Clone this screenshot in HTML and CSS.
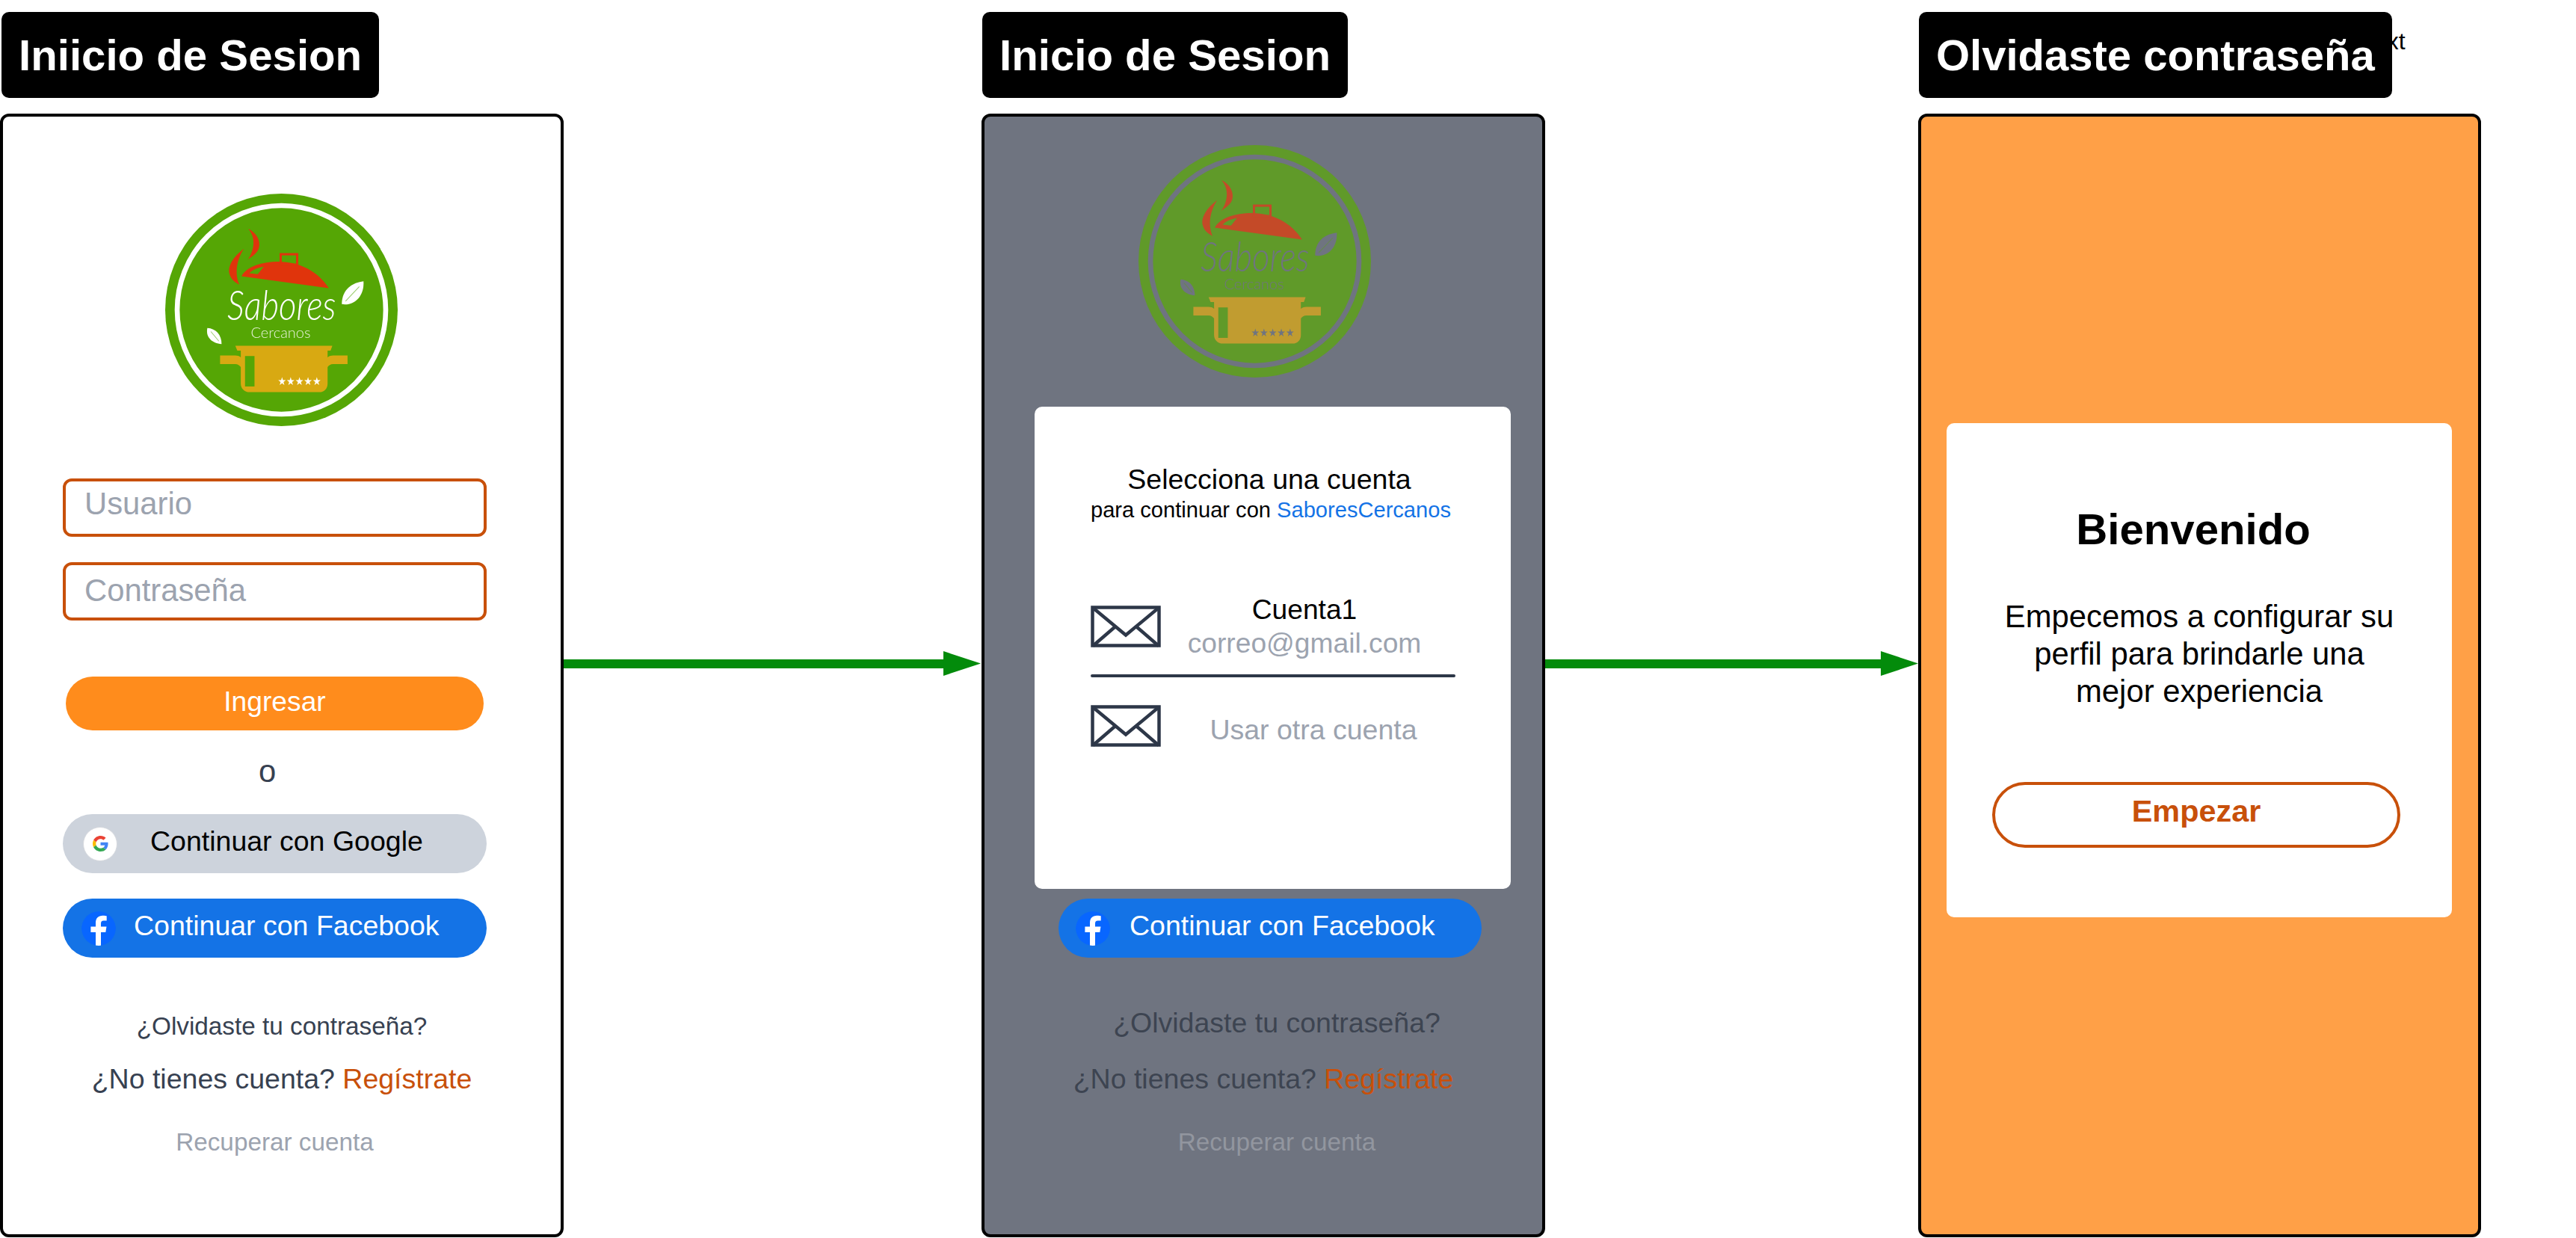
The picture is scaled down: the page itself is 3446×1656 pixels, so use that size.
FILE: index.html
```html
<!DOCTYPE html>
<html lang="es">
<head>
<meta charset="utf-8">
<title>Sabores Cercanos</title>
<link rel="stylesheet" href="styles.css">
</head>
<body>
<svg class="defs" width="0" height="0" aria-hidden="true">
  <defs>
    <symbol id="logo" viewBox="128 89 930 932">
      <circle class="l-disc" cx="593" cy="555" r="466"/>
      <circle class="l-ring" cx="593" cy="555" r="418"/>
      <path class="l-red" d="M460 230C502 250 518 298 492 326C480 340 468 345 458 354C482 320 494 270 460 230Z"/>
      <path class="l-red" d="M442 310C402 340 375 380 385 412C392 436 410 446 424 454C410 420 405 370 442 310Z"/>
      <path class="l-red" d="M433 420C450 388 500 365 570 362C660 358 740 400 783 468Z"/>
      <path class="l-hole" d="M464 408C478 394 498 386 522 382L498 412Z"/>
      <rect class="l-handle" x="590" y="332" width="66" height="42"/>
      <path class="l-white" d="M922 440C880 445 835 470 835 532C885 540 926 500 922 440Z"/>
      <path class="l-vein" d="M850 520L905 462"/>
      <path class="l-white" d="M296 628C330 630 353 655 353 692C315 690 288 665 296 628Z"/>
      <path class="l-vein" d="M310 642L342 680"/>
      <text class="l-sabores" x="376" y="596" textLength="436" lengthAdjust="spacingAndGlyphs">Sabores</text>
      <text class="l-cercanos" x="470" y="668" textLength="240" lengthAdjust="spacingAndGlyphs">Cercanos</text>
      <path class="l-pot" d="M408 699H797L790 718H778V745C785 740 792 738 800 738H858V772H800C790 772 782 778 778 784V850C778 870 765 885 745 885H465C445 885 430 870 430 850V784C425 778 418 772 408 772H347V738H408C416 738 424 740 430 745V718H416Z"/>
      <rect class="l-slot" x="447" y="740" width="38" height="122"/>
      <text class="l-stars" x="578" y="856" textLength="174" lengthAdjust="spacingAndGlyphs">★★★★★</text>
    </symbol>
    <symbol id="mail" viewBox="0 0 94 56">
      <rect class="m-line" x="2.5" y="2.5" width="89" height="51"/>
      <path class="m-line" d="M3 3L47 39.500L91 3M3 54L32 29M91 54L62 29"/>
    </symbol>
    <symbol id="fb" viewBox="0 0 46 46">
      <circle class="f-disc" cx="23" cy="23" r="23"/>
      <path class="f-glyph" d="M26 46V28h6.300l1.200-7.500H26v-4.200c0-2.200 1-3.800 3.800-3.800h3.900V6.200S31 5.700 28.300 5.700C22.600 5.700 19 9.100 19 15.400v5.100h-6.600V28H19v18Z"/>
    </symbol>
    <symbol id="google" viewBox="0 0 48 48">
      <path fill="#EA4335" d="M24 9.500c3.540 0 6.710 1.220 9.210 3.600l6.850-6.850C35.900 2.380 30.470 0 24 0 14.620 0 6.510 5.380 2.560 13.220l7.980 6.190C12.430 13.720 17.740 9.500 24 9.500z"/>
      <path fill="#4285F4" d="M46.980 24.550c0-1.570-.15-3.090-.38-4.550H24v9.020h12.940c-.58 2.960-2.260 5.480-4.780 7.180l7.730 6c4.510-4.180 7.090-10.360 7.090-17.650z"/>
      <path fill="#FBBC05" d="M10.530 28.590c-.48-1.450-.76-2.990-.76-4.590s.27-3.140.76-4.590l-7.980-6.190C.92 16.460 0 20.120 0 24c0 3.880.92 7.540 2.560 10.780l7.970-6.190z"/>
      <path fill="#34A853" d="M24 48c6.480 0 11.930-2.130 15.890-5.810l-7.730-6c-2.150 1.450-4.920 2.300-8.160 2.300-6.260 0-11.570-4.220-13.470-9.910l-7.980 6.190C6.510 42.620 14.620 48 24 48z"/>
    </symbol>
  </defs>
</svg>

<main class="board">
  <section class="screen screen-login">
    <h1 class="title">Iniicio de Sesion</h1>
    <div class="panel panel-white">
      <svg class="logo logo-a"><use href="#logo"/></svg>
      <div class="field field-user">Usuario</div>
      <div class="field field-pass">Contraseña</div>
      <button class="btn-login">Ingresar</button>
      <p class="or">o</p>
      <div class="social social-google">
        <span class="google-badge"><svg class="google-icon"><use href="#google"/></svg></span>
        <span class="social-label">Continuar con Google</span>
      </div>
      <div class="social social-fb">
        <svg class="fb-icon"><use href="#fb"/></svg>
        <span class="social-label">Continuar con Facebook</span>
      </div>
      <p class="forgot">¿Olvidaste tu contraseña?</p>
      <p class="signup">¿No tienes cuenta? <span class="accent">Regístrate</span></p>
      <p class="recover">Recuperar cuenta</p>
    </div>
  </section>

  <div class="connector connector-a"><span class="shaft"></span><span class="head"></span></div>

  <section class="screen screen-select">
    <h1 class="title title-b">Inicio de Sesion</h1>
    <div class="panel panel-gray">
      <svg class="logo logo-b"><use href="#logo"/></svg>
      <div class="modal">
        <h2 class="modal-title">Selecciona una cuenta</h2>
        <p class="modal-sub">para continuar con <span class="link">SaboresCercanos</span></p>
        <div class="account">
          <svg class="mail"><use href="#mail"/></svg>
          <div class="account-text">
            <div class="account-name">Cuenta1</div>
            <div class="account-mail">correo@gmail.com</div>
          </div>
        </div>
        <div class="divider"></div>
        <div class="account account-other">
          <svg class="mail mail-other"><use href="#mail"/></svg>
          <div class="other-text">Usar otra cuenta</div>
        </div>
      </div>
      <div class="social social-fb social-fb-b">
        <svg class="fb-icon"><use href="#fb"/></svg>
        <span class="social-label">Continuar con Facebook</span>
      </div>
      <p class="forgot forgot-b">¿Olvidaste tu contraseña?</p>
      <p class="signup signup-b">¿No tienes cuenta? <span class="accent">Regístrate</span></p>
      <p class="recover recover-b">Recuperar cuenta</p>
    </div>
  </section>

  <div class="connector connector-b"><span class="shaft"></span><span class="head"></span></div>

  <section class="screen screen-welcome">
    <span class="stray">Text</span>
    <h1 class="title title-c">Olvidaste contraseña</h1>
    <div class="panel panel-orange">
      <div class="card">
        <h2 class="card-title">Bienvenido</h2>
        <p class="card-text">Empecemos a configurar su<br>perfil para brindarle una<br>mejor experiencia</p>
        <button class="btn-start">Empezar</button>
      </div>
    </div>
  </section>
</main>
</body>
</html>
```

FILE: styles.css
```css
* { box-sizing: border-box; }
html, body { margin: 0; padding: 0; background: #fff; }
body { font-family: "Liberation Sans", Arial, sans-serif; color: #000; overflow: hidden; }
p, h1, h2 { margin: 0; font-weight: normal; }
button { font-family: inherit; border: 0; padding: 0; cursor: pointer; }
.defs { position: absolute; }

.board { display: flex; width: 3446px; height: 1656px; align-items: flex-start; }
.screen { position: relative; flex: 0 0 754px; display: flex; flex-direction: column; padding-top: 16px; }

.title {
  align-self: flex-start; position: relative; z-index: 1; height: 115px; margin: 0 0 21px 2px; padding: 0 23px;
  background: #000; color: #fff; border-radius: 10px; font-size: 58.200px; font-weight: bold; line-height: 115px; white-space: nowrap;
}
.title-b { margin-left: 1px; }
.title-c { margin-left: 1px; font-size: 58px; }
.stray { position: absolute; left: 593px; top: 37px; font-size: 32px; line-height: 36px; }

.panel { width: 754px; height: 1503px; border: 4px solid #000; border-radius: 12px; display: flex; flex-direction: column; align-items: flex-start; }
.panel-white { background: #fff; }
.panel-gray { background: #6f7480; }
.panel-orange { width: 753px; background: #ffa047; }

/* Connectors */
.connector { display: flex; align-items: center; height: 33px; margin-top: 871px; }
.connector-a { flex: 0 0 558px; margin-right: 1px; }
.connector-b { flex: 0 0 499px; }
.shaft { flex: 1; height: 12px; background: #038b0b; }
.head { flex: 0 0 50px; height: 33px; background: #038b0b; clip-path: polygon(0 0, 100% 50%, 0 100%); }

/* Logo */
.logo { width: 311px; height: 311px; filter: blur(0.5px); flex: none; display: block; }
.logo-a { margin: 103px 0 0 217px; --disc: #55a605; --white: #fff; --red: #e0340c; --pot: #d8a912; --letter: #fff; --letter2: #e6f1d8; --star: #fff; }
.logo-b { margin: 38px 0 0 206px; --disc: #609a29; --white: #6f7480; --red: #c44a28; --pot: #c19c30; --letter: #6f7480; --letter2: #6f7480; --star: #6f7480; }
.l-disc { fill: var(--disc); }
.l-ring { fill: none; stroke: var(--white); stroke-width: 20; }
.l-red { fill: var(--red); }
.l-hole, .l-slot { fill: var(--disc); }
.l-handle { fill: none; stroke: var(--red); stroke-width: 9; }
.l-white { fill: var(--white); }
.l-vein { fill: none; stroke: var(--disc); stroke-width: 3; opacity: .6; }
.l-sabores { font-family: Lato, "Open Sans", sans-serif; font-weight: 300; font-style: italic; font-size: 165px; fill: var(--letter); }
.l-cercanos { font-family: Lato, "Open Sans", sans-serif; font-weight: 300; font-size: 58px; fill: var(--letter2); }
.l-pot { fill: var(--pot); }
.l-stars { font-family: "DejaVu Sans", sans-serif; font-size: 44px; fill: var(--star); }

/* Form */
.field {
  width: 567px; height: 78px; margin-left: 80px; padding: 0 25px; display: flex; align-items: center;
  border: 4px solid #c8500a; border-radius: 12px; color: #9ca3af; font-size: 41.800px; background: #fff;
}
.field-user { margin-top: 70px; padding-bottom: 11px; }
.field-pass { margin-top: 34px; padding-bottom: 3px; }
.btn-login { width: 559px; height: 72px; margin: 75px 0 0 84px; padding-bottom: 6px; border-radius: 36px; background: #ff8c1c; color: #fff; font-size: 37.200px; }
.or { width: 547px; margin: 32px 0 0 80px; text-align: center; font-size: 41.800px; line-height: 46px; color: #374151; }

.social { width: 567px; height: 79px; margin-left: 80px; border-radius: 40px; display: flex; align-items: center; font-size: 37.500px; }
.social-label { padding-bottom: 7px; white-space: nowrap; }
.social-google { margin-top: 34px; padding-left: 27px; gap: 44px; background: #cdd3dc; }
.social-fb { margin-top: 34px; padding-left: 25px; gap: 24px; background: #1473e6; color: #fff; }
.social-fb-b { width: 566px; margin: 13px 0 0 99px; padding-left: 23px; gap: 26px; }
.google-badge { width: 46px; height: 46px; border-radius: 50%; background: #fff; border: 1px solid #d6d9de; display: flex; align-items: center; justify-content: center; flex: none; }
.google-icon { width: 21px; height: 21px; }
.fb-icon { width: 46px; height: 46px; flex: none; border-radius: 50%; overflow: hidden; }
.f-disc { fill: #0866ff; }
.f-glyph { fill: #fff; }

.forgot { width: 100%; margin-top: 72px; text-align: center; font-size: 33.300px; line-height: 40px; color: #374151; }
.signup { width: 100%; margin-top: 28px; text-align: center; font-size: 37.500px; line-height: 44px; color: #374151; }
.accent { color: #c8500a; }
.recover { width: 567px; margin: 43px 0 0 80px; text-align: center; font-size: 33.300px; line-height: 40px; color: #9ca3af; }

.forgot-b { width: 584px; margin: 65px 0 0 99px; font-size: 37.500px; line-height: 44px; color: #3d4451; }
.signup-b { margin-top: 31px; color: #3d4451; }
.recover-b { width: 584px; margin: 43px 0 0 99px; color: #92969f; }

/* Modal */
.modal { width: 637px; height: 645px; margin: 39px 0 0 67px; padding: 76px 0 0 75px; background: #fff; border-radius: 10px; flex: none; }
.modal-title { width: 478px; text-align: center; font-size: 37.500px; line-height: 42px; white-space: nowrap; }
.modal-sub { width: 475px; margin-top: 2px; text-align: center; font-size: 29.100px; line-height: 36px; white-space: nowrap; }
.link { color: #1473e6; }
.account { width: 488px; margin-top: 92px; display: flex; align-items: flex-start; }
.mail { width: 94px; height: 56px; margin-top: 18px; flex: none; }
.m-line { fill: none; stroke: #2d3748; stroke-width: 4.500; }
.account-text { flex: 1; padding-right: 10px; text-align: center; font-size: 37.200px; line-height: 46px; }
.account-mail { color: #9ca3af; margin-top: -1px; }
.divider { width: 488px; height: 4px; margin-top: 19px; background: #2d3748; border-radius: 2px; }
.account-other { margin-top: 37px; align-items: center; }
.mail-other { margin-top: 0; }
.other-text { flex: 1; padding: 10px 0 0 14px; text-align: center; font-size: 37.500px; color: #9ca3af; }

/* Welcome card */
.card { width: 676px; height: 661px; margin: 410px 0 0 34px; padding-top: 109px; background: #fff; border-radius: 10px; flex: none; }
.card-title { width: 660px; text-align: center; font-size: 58.200px; font-weight: bold; line-height: 66px; }
.card-text { margin-top: 59px; text-align: center; font-size: 41.800px; line-height: 50px; }
.btn-start { display: block; width: 546px; height: 88px; margin: 96px 0 0 61px; padding-bottom: 10px; border: 4px solid #c8500a; border-radius: 44px; background: #fff; color: #c8500a; font-size: 41.400px; font-weight: bold; }
```
